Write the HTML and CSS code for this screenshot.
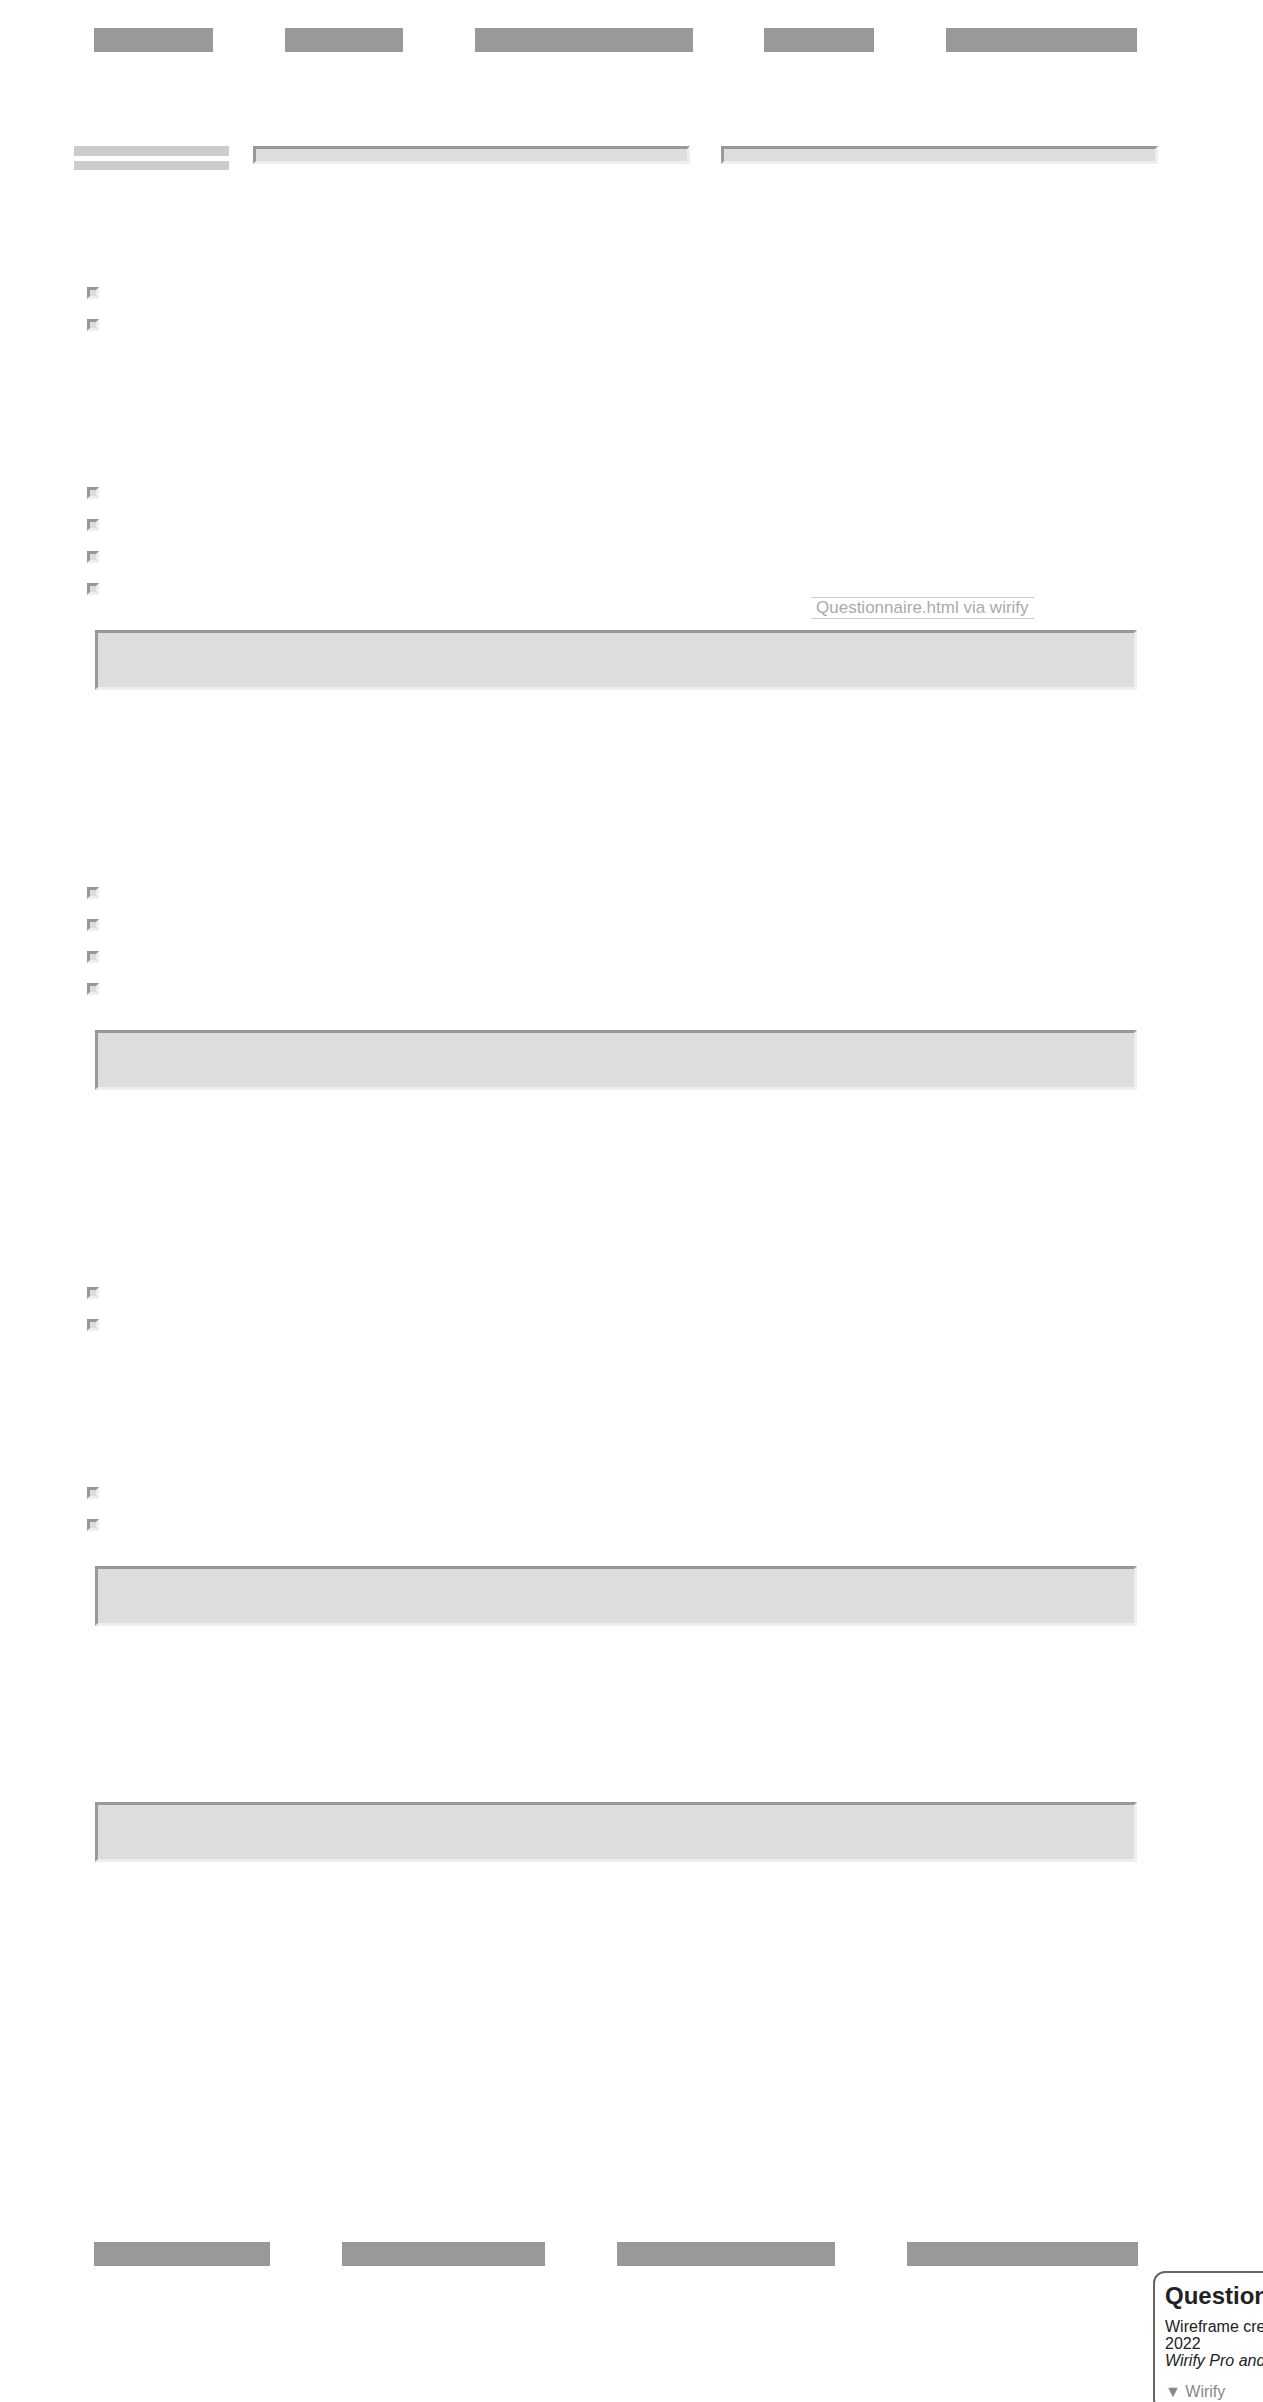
FILE: index.html
```html
<!DOCTYPE html>
<html lang="en">
<head>
  <meta charset="UTF-8" />
  <meta name="viewport" content="width=device-width, initial-scale=1.0"/>
  <title>Questionnaire</title>
  <link rel="stylesheet" href="styles.css">
</head>

<body>

  <!-- TOP NAV -->
  <nav class="topnav">
    <span class="bar w119"></span>
    <span class="bar w118"></span>
    <span class="bar w218"></span>
    <span class="bar w110"></span>
    <span class="bar w191"></span>
  </nav>

  <!-- HEADER ROW -->
  <div class="header">
    <div class="stack">
      <span class="line tall"></span>
      <span class="line"></span>
    </div>
    <div class="field small first"></div>
    <div class="field small second"></div>
  </div>

  <!-- QUESTIONS -->
  <div class="checks gap-first">
    <span class="check"></span>
    <span class="check"></span>
  </div>

  <div class="checks gap-wide">
    <span class="check"></span>
    <span class="check"></span>
    <span class="check"></span>
    <span class="check"></span>
  </div>

  <div class="caption">Questionnaire.html via wirify</div>
  <div class="field big"></div>

  <div class="checks gap-big">
    <span class="check"></span>
    <span class="check"></span>
    <span class="check"></span>
    <span class="check"></span>
  </div>
  <div class="field big gap-box"></div>

  <div class="checks gap-big">
    <span class="check"></span>
    <span class="check"></span>
  </div>

  <div class="checks gap-wide">
    <span class="check"></span>
    <span class="check"></span>
  </div>
  <div class="field big gap-box"></div>

  <div class="field big gap-last"></div>

  <!-- FOOTER NAV -->
  <nav class="footnav">
    <span class="bar w176"></span>
    <span class="bar w203"></span>
    <span class="bar w218"></span>
    <span class="bar w231"></span>
  </nav>

  <!-- WIRIFY PANEL -->
  <div class="wirify">
    <h2>Questionnaire</h2>
    <p>Wireframe created on 14 June<br>2022</p>
    <p class="note">Wirify Pro and Team features</p>
    <div class="toggle">&#9660; Wirify</div>
  </div>

</body>
</html>
```

FILE: styles.css
```css
* {
  box-sizing: border-box;
}

html {
  overflow: hidden;
}

body {
  margin: 0;
  background: #fff;
  font-family: "Liberation Sans", Arial, sans-serif;
}

.bar {
  display: block;
  height: 24px;
  background: #999;
}

.w110 { width: 110px; }
.w118 { width: 118px; }
.w119 { width: 119px; }
.w176 { width: 176px; }
.w191 { width: 191px; }
.w203 { width: 203px; }
.w218 { width: 218px; }
.w231 { width: 231px; }

.topnav {
  display: flex;
  justify-content: space-between;
  padding: 28px 126px 0 94px;
}

.footnav {
  display: flex;
  justify-content: space-between;
  margin: 380px 125px 0 94px;
}

.header {
  display: flex;
  align-items: flex-start;
  margin: 94px 0 0 74px;
}

.stack {
  display: flex;
  flex-direction: column;
  gap: 5px;
  width: 155px;
}

.line {
  display: block;
  height: 9px;
  background: #ccc;
}

.line.tall {
  height: 10px;
}

/* inset wireframe field */
.field {
  background: #ddd;
  border-top: 3px solid #999;
  border-left: 3px solid #999;
  border-right: 3px solid #eee;
  border-bottom: 3px solid #eee;
}

.field.small {
  width: 437px;
  height: 18px;
}

.field.first {
  margin-left: 24px;
}

.field.second {
  margin-left: 31px;
}

.field.big {
  width: 1042px;
  height: 60px;
  margin-left: 95px;
}

.checks {
  display: flex;
  flex-direction: column;
  gap: 20px;
  margin-left: 87px;
}

.check {
  display: block;
  width: 12px;
  height: 12px;
  background: #ddd;
  border-top: 3px solid #999;
  border-left: 3px solid #999;
  border-right: 3px solid #eee;
  border-bottom: 3px solid #eee;
}

.gap-first { margin-top: 117px; }
.gap-wide { margin-top: 156px; }
.gap-big { margin-top: 197px; }
.gap-box { margin-top: 35px; }
.gap-last { margin-top: 176px; }

.caption {
  width: fit-content;
  margin: 2px 0 11px 811px;
  padding: 0 5px;
  border-top: 1px solid #ccc;
  border-bottom: 1px solid #ccc;
  color: #aaa;
  font-size: 17px;
  line-height: 20px;
  white-space: nowrap;
}

.wirify {
  position: absolute;
  left: 1153px;
  top: 2271px;
  width: 290px;
  padding: 10px 12px 10px 10px;
  background: #fff;
  border: 2px solid #666;
  border-radius: 12px;
  color: #222;
}

.wirify h2 {
  margin: 0;
  font-size: 24px;
  line-height: 26px;
}

.wirify p {
  margin: 9px 0 0;
  font-size: 16px;
  line-height: 17px;
}

.wirify p.note {
  margin-top: 0;
  font-style: italic;
}

.toggle {
  margin-top: 14px;
  color: #888;
  font-size: 16px;
  line-height: 17px;
}
```
